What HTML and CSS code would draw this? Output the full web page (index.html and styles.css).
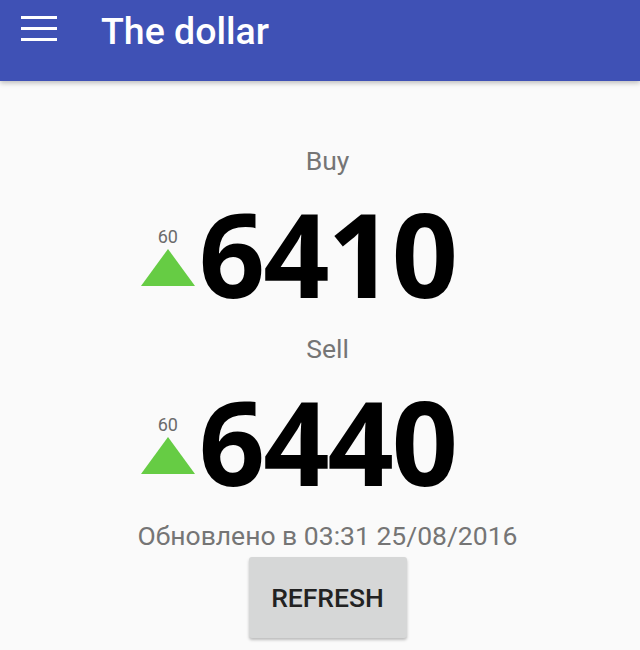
FILE: index.html
```html
<!DOCTYPE html>
<html lang="en">
<head>
  <meta charset="UTF-8">
  <meta name="viewport" content="width=device-width, initial-scale=1.0">
  <title>The dollar</title>
  <link rel="stylesheet" href="styles.css">
</head>
<body>

<header class="toolbar">
  <div class="menu-icon">
    <span></span>
    <span></span>
    <span></span>
  </div>
  <h1 class="toolbar-title">The dollar</h1>
</header>

<main class="content">
  <div class="rate-label">Buy</div>
  <div class="rate-row">
    <div class="change">
      <span class="change-value">60</span>
      <span class="arrow-up"></span>
    </div>
    <div class="rate-value">6410</div>
  </div>

  <div class="rate-label">Sell</div>
  <div class="rate-row">
    <div class="change">
      <span class="change-value">60</span>
      <span class="arrow-up"></span>
    </div>
    <div class="rate-value">6440</div>
  </div>

  <p class="updated">Обновлено в 03:31 25/08/2016</p>
  <button class="refresh-btn">REFRESH</button>
</main>

</body>
</html>
```

FILE: styles.css
```css
body {
  margin: 0;
  background: #fafafa;
  font-family: Roboto, "Noto Sans", sans-serif;
  width: 640px;
  height: 650px;
  overflow: hidden;
}
.toolbar {
  display: flex;
  align-items: flex-start;
  height: 81px;
  background: #3f51b5;
  box-shadow: 0 2px 5px rgba(0, 0, 0, 0.25);
  position: relative;
  z-index: 1;
}
.menu-icon {
  display: flex;
  flex-direction: column;
  gap: 8px;
  width: 36px;
  margin: 16px 0 0 21px;
}
.menu-icon span {
  display: block;
  height: 3px;
  background: #fff;
}
.toolbar-title {
  margin: 7px 0 0 44px;
  font-size: 37.5px;
  font-weight: 500;
  line-height: 48px;
  color: #fff;
}
.content {
  display: flex;
  flex-direction: column;
  align-items: center;
  padding: 0 0 0 15px;
}
.rate-label {
  margin-top: 64px;
  font-size: 26.5px;
  line-height: 32px;
  color: #757575;
}
.rate-label + .rate-row {
  margin-top: 16px;
}
.rate-row + .rate-label {
  margin-top: 20px;
}
.rate-row {
  display: grid;
  grid-template-columns: 1fr auto 1fr;
  width: 100%;
  align-items: end;
}
.change {
  justify-self: end;
  display: flex;
  flex-direction: column;
  align-items: center;
  margin: 0 4px 27px 0;
}
.change-value {
  font-size: 18px;
  line-height: 20px;
  color: #6b6b6b;
}
.arrow-up {
  width: 0;
  height: 0;
  border-left: 27px solid transparent;
  border-right: 27px solid transparent;
  border-bottom: 37px solid #66cc44;
  margin-top: 2px;
}
.rate-value {
  font-family: "Noto Sans", "Open Sans", sans-serif;
  font-weight: 700;
  font-size: 116px;
  line-height: 120px;
  letter-spacing: -2px;
  color: #000;
}
.updated {
  margin: 19px 0 0;
  font-size: 26.5px;
  line-height: 32px;
  color: #757575;
}
.refresh-btn {
  margin-top: 5px;
  width: 158px;
  height: 81px;
  border: none;
  border-radius: 3px;
  background: #d6d7d7;
  box-shadow: 0 2px 3px rgba(0, 0, 0, 0.25);
  font-family: Roboto, sans-serif;
  font-size: 26.5px;
  font-weight: 500;
  color: #222;
}
```
